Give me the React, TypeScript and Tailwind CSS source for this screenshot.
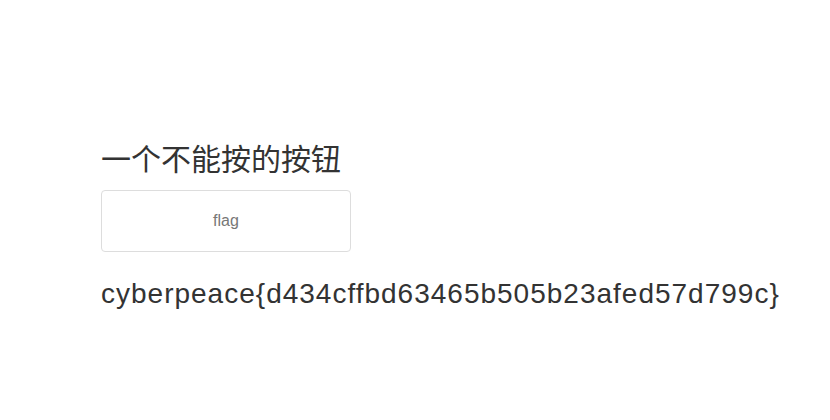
export default function App() {
    return (
        <main className="w-full h-[420px] bg-white font-['Liberation_Sans','Noto_Sans_CJK_SC',sans-serif] text-[#333]">
            <section className="flex flex-col pl-[101px] pt-[140px]">
                <h3 className="text-[30px] leading-[40px] font-normal">一个不能按的按钮</h3>
                <button className="mt-[10px] w-[250px] h-[62px] border border-[#ddd] rounded-[4px] bg-white text-[16px] text-[#777]">
                    flag
                </button>
                <p className="mt-[24px] text-[28px] leading-[36px] tracking-[1px]">cyberpeace{'{'}d434cffbd63465b505b23afed57d799c{'}'}</p>
            </section>
        </main>
    );
}
